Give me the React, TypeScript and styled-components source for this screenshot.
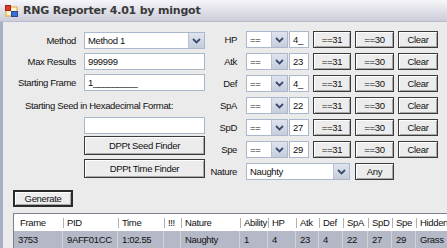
import React from "react";
import styled, { createGlobalStyle } from "styled-components";

const GlobalStyle = createGlobalStyle`
    html, body { margin: 0; padding: 0; background: #ebebeb; }
    body {
        font-family: "Liberation Sans", Arial, sans-serif;
        font-size: 9.5px;
        letter-spacing: -0.35px;
        color: #111;
    }
`;

const Window = styled.div`
    width: 447px;
    height: 248px;
    overflow: hidden;
    display: flex;
    flex-direction: column;
    background: #ebebeb;
`;

const TitleBar = styled.div`
    height: 22px;
    flex: none;
    display: flex;
    align-items: center;
    gap: 5px;
    padding-left: 5px;
    background: linear-gradient(#f6f6f9 0%, #e2e2ea 45%, #cdcdd9 100%);
    border-bottom: 1px solid #b9bccb;
    box-sizing: border-box;
`;

const TitleText = styled.span`
    font-family: "DejaVu Sans", "Liberation Sans", sans-serif;
    font-size: 11px;
    font-weight: bold;
    color: #3a3a3a;
    letter-spacing: -0.2px;
`;

const Body = styled.div`
    flex: 1;
    display: flex;
    flex-direction: column;
    border-left: 3px solid #a7aec5;
    padding: 10px 0 0 10px;
    min-height: 0;
`;

const Form = styled.div`
    display: flex;
`;

const LeftPanel = styled.div`
    width: 192px;
    display: flex;
    flex-direction: column;
`;

const FieldRow = styled.div<{ $mt?: number }>`
    display: flex;
    align-items: center;
    gap: 8px;
    height: 17px;
    margin-top: ${p => p.$mt ?? 0}px;
`;

const Label = styled.span<{ $w: number }>`
    width: ${p => p.$w}px;
    text-align: right;
    white-space: nowrap;
    flex: none;
`;

const SeedLabel = styled.div`
    margin: 9px 0 0 12px;
    height: 12px;
    line-height: 12px;
    white-space: nowrap;
`;

const TextBox = styled.div<{ $w: number; $ml?: number; $mt?: number }>`
    width: ${p => p.$w}px;
    height: 17px;
    margin-left: ${p => p.$ml ?? 0}px;
    margin-top: ${p => p.$mt ?? 0}px;
    box-sizing: border-box;
    background: #fff;
    border: 1px solid #a9b8cc;
    padding: 0 3px;
    line-height: 15px;
    flex: none;
    white-space: nowrap;
    overflow: hidden;
`;

const Combo = styled.div<{ $w: number }>`
    width: ${p => p.$w}px;
    height: 17px;
    box-sizing: border-box;
    background: #fff;
    border: 1px solid #a9b8cc;
    display: flex;
    flex: none;
`;

const ComboText = styled.span`
    flex: 1;
    padding-left: 3px;
    line-height: 15px;
    white-space: nowrap;
    overflow: hidden;
`;

const ComboArrow = styled.span`
    width: 15px;
    background: linear-gradient(#dfe4ee, #c5cddc);
    border-left: 1px solid #b8c2d4;
    display: flex;
    align-items: center;
    justify-content: center;
`;

const Button = styled.div<{ $w: number; $h?: number; $ml?: number; $mt?: number; $default?: boolean }>`
    width: ${p => p.$w}px;
    height: ${p => p.$h ?? 17}px;
    margin-left: ${p => p.$ml ?? 0}px;
    margin-top: ${p => p.$mt ?? 0}px;
    box-sizing: border-box;
    border: ${p => (p.$default ? "2px solid #2a2a2a" : "1px solid #3a3a3a")};
    background: #ececec;
    box-shadow: inset 1px 1px 0 #fff, inset -1px -1px 0 #a8a8a8;
    display: flex;
    align-items: center;
    justify-content: center;
    flex: none;
    white-space: nowrap;
`;

const RightPanel = styled.div`
    display: flex;
    flex-direction: column;
    gap: 5px;
    margin-top: -1px;
`;

const StatRow = styled.div`
    display: flex;
    align-items: center;
    height: 17px;
`;

const StatLabel = styled.span`
    width: 32px;
    text-align: right;
    margin-right: 9px;
    flex: none;
`;

const Grid = styled.div`
    margin-top: 6px;
    display: grid;
    grid-template-columns: 49px 55px 46px 17px 59px 28px 28px 23px 24px 25px 24px 24px 60px;
    grid-template-rows: 17px 18px;
    border-left: 1px solid #7b8090;
    border-top: 1px solid #7b8090;
    background: #fff;
`;

const HeadCell = styled.div<{ $first?: boolean }>`
    position: relative;
    padding-left: ${p => (p.$first ? 6 : 4)}px;
    line-height: 17px;
    white-space: nowrap;
    overflow: hidden;
    background: #fff;
    &::before {
        content: "";
        display: ${p => (p.$first ? "none" : "block")};
        position: absolute;
        left: 0;
        top: 4px;
        height: 10px;
        border-left: 1px solid #b0b0b0;
    }
`;

const DataCell = styled.div`
    background: #b5b8c6;
    border-right: 1px solid #d2d4dc;
    padding-left: 4px;
    line-height: 18px;
    white-space: nowrap;
    overflow: hidden;
`;

const Chevron = () => (
    <svg width="9" height="6" viewBox="0 0 9 6">
        <path d="M1 1 L4.5 4.5 L8 1" stroke="#3b4a6b" strokeWidth="1.8" fill="none" />
    </svg>
);

const AppIcon = () => (
    <svg width="13" height="12" viewBox="0 0 13 12">
        <rect x="1" y="2" width="11" height="9" fill="#fff6c8" stroke="#e2a52a" />
        <rect x="0.5" y="0.5" width="5" height="5" fill="#e03a2a" stroke="#a5201a" />
        <rect x="6.5" y="6.5" width="6" height="5" fill="#3a6fd8" stroke="#24479a" />
    </svg>
);

const stats = [
    { name: "HP", val: "4_" },
    { name: "Atk", val: "23" },
    { name: "Def", val: "4_" },
    { name: "SpA", val: "22" },
    { name: "SpD", val: "27" },
    { name: "Spe", val: "29" },
];

const headers = ["Frame", "PID", "Time", "!!!", "Nature", "Ability", "HP", "Atk", "Def", "SpA", "SpD", "Spe", "Hidden"];
const row = ["3753", "9AFF01CC", "1:02.55", "", "Naughty", "1", "4", "23", "4", "22", "27", "29", "Grass"];

export default function App() {
    return (
        <Window>
            <GlobalStyle />
            <TitleBar>
                <AppIcon />
                <TitleText>RNG Reporter 4.01 by mingot</TitleText>
            </TitleBar>
            <Body>
                <Form>
                    <LeftPanel>
                        <FieldRow>
                            <Label $w={63}>Method</Label>
                            <Combo $w={121}>
                                <ComboText>Method 1</ComboText>
                                <ComboArrow><Chevron /></ComboArrow>
                            </Combo>
                        </FieldRow>
                        <FieldRow $mt={4}>
                            <Label $w={63}>Max Results</Label>
                            <TextBox $w={121}>999999</TextBox>
                        </FieldRow>
                        <FieldRow $mt={4}>
                            <Label $w={63}>Starting Frame</Label>
                            <TextBox $w={121}>1_________</TextBox>
                        </FieldRow>
                        <SeedLabel>Starting Seed in Hexadecimal Format:</SeedLabel>
                        <TextBox $w={121} $ml={71} $mt={5} />
                        <Button $w={121} $h={19} $ml={71} $mt={2}>DPPt Seed Finder</Button>
                        <Button $w={121} $h={19} $ml={71} $mt={4}>DPPt Time Finder</Button>
                    </LeftPanel>
                    <RightPanel>
                        {stats.map(s => (
                            <StatRow key={s.name}>
                                <StatLabel>{s.name}</StatLabel>
                                <Combo $w={42}>
                                    <ComboText>==</ComboText>
                                    <ComboArrow><Chevron /></ComboArrow>
                                </Combo>
                                <TextBox $w={20} $ml={1}>{s.val}</TextBox>
                                <Button $w={38} $ml={4}>==31</Button>
                                <Button $w={39} $ml={4}>==30</Button>
                                <Button $w={40} $ml={4}>Clear</Button>
                            </StatRow>
                        ))}
                        <StatRow>
                            <StatLabel>Nature</StatLabel>
                            <Combo $w={104}>
                                <ComboText>Naughty</ComboText>
                                <ComboArrow><Chevron /></ComboArrow>
                            </Combo>
                            <Button $w={39} $ml={5}>Any</Button>
                        </StatRow>
                    </RightPanel>
                </Form>
                <Button $w={60} $mt={10} $default>Generate</Button>
                <Grid>
                    {headers.map((h, i) => (
                        <HeadCell key={h} $first={i === 0}>{h}</HeadCell>
                    ))}
                    {row.map((c, i) => (
                        <DataCell key={i}>{c}</DataCell>
                    ))}
                </Grid>
            </Body>
        </Window>
    );
}
